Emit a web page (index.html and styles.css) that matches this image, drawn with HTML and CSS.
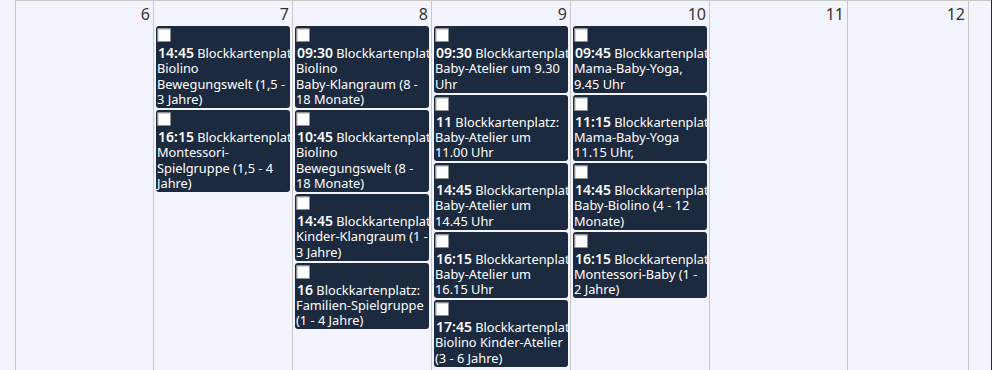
FILE: index.html
```html
<!DOCTYPE html>
<html lang="de">
<head>
<meta charset="utf-8">
<title>Kalender</title>
<link rel="stylesheet" href="styles.css">
</head>
<body>
<div class="page">
  <div class="week">
    <div class="day w138"><div class="num">6</div></div>
    <div class="day w139"><div class="num">7</div>
      <div class="ev"><span class="cb"></span><div class="txt"><div class="l1"><b>14:45</b> Blockkartenplatz:</div>Biolino<br>Bewegungswelt (1,5 -<br>3 Jahre)</div></div>
      <div class="ev"><span class="cb"></span><div class="txt"><div class="l1"><b>16:15</b> Blockkartenplatz:</div>Montessori-<br>Spielgruppe (1,5 - 4<br>Jahre)</div></div>
    </div>
    <div class="day w139"><div class="num">8</div>
      <div class="ev"><span class="cb"></span><div class="txt"><div class="l1"><b>09:30</b> Blockkartenplatz:</div>Biolino<br>Baby-Klangraum (8 -<br>18 Monate)</div></div>
      <div class="ev"><span class="cb"></span><div class="txt"><div class="l1"><b>10:45</b> Blockkartenplatz:</div>Biolino<br>Bewegungswelt (8 -<br>18 Monate)</div></div>
      <div class="ev"><span class="cb"></span><div class="txt"><div class="l1"><b>14:45</b> Blockkartenplatz:</div>Kinder-Klangraum (1 -<br>3 Jahre)</div></div>
      <div class="ev"><span class="cb"></span><div class="txt"><div class="l1"><b>16</b> Blockkartenplatz:</div>Familien-Spielgruppe<br>(1 - 4 Jahre)</div></div>
    </div>
    <div class="day w139"><div class="num">9</div>
      <div class="ev"><span class="cb"></span><div class="txt"><div class="l1"><b>09:30</b> Blockkartenplatz:</div>Baby-Atelier um 9.30<br>Uhr</div></div>
      <div class="ev"><span class="cb"></span><div class="txt"><div class="l1"><b>11</b> Blockkartenplatz:</div>Baby-Atelier um<br>11.00 Uhr</div></div>
      <div class="ev"><span class="cb"></span><div class="txt"><div class="l1"><b>14:45</b> Blockkartenplatz:</div>Baby-Atelier um<br>14.45 Uhr</div></div>
      <div class="ev"><span class="cb"></span><div class="txt"><div class="l1"><b>16:15</b> Blockkartenplatz:</div>Baby-Atelier um<br>16.15 Uhr</div></div>
      <div class="ev"><span class="cb"></span><div class="txt"><div class="l1"><b>17:45</b> Blockkartenplatz:</div>Biolino Kinder-Atelier<br>(3 - 6 Jahre)</div></div>
    </div>
    <div class="day w139"><div class="num">10</div>
      <div class="ev"><span class="cb"></span><div class="txt"><div class="l1"><b>09:45</b> Blockkartenplatz:</div>Mama-Baby-Yoga,<br>9.45 Uhr</div></div>
      <div class="ev"><span class="cb"></span><div class="txt"><div class="l1"><b>11:15</b> Blockkartenplatz:</div>Mama-Baby-Yoga<br>11.15 Uhr,</div></div>
      <div class="ev"><span class="cb"></span><div class="txt"><div class="l1"><b>14:45</b> Blockkartenplatz:</div>Baby-Biolino (4 - 12<br>Monate)</div></div>
      <div class="ev"><span class="cb"></span><div class="txt"><div class="l1"><b>16:15</b> Blockkartenplatz:</div>Montessori-Baby (1 -<br>2 Jahre)</div></div>
    </div>
    <div class="day w138"><div class="num">11</div></div>
    <div class="day w121 last"><div class="num">12</div></div>
  </div>
</div>
</body>
</html>
```

FILE: styles.css
```css
html, body {
  margin: 0;
  padding: 0;
  background: #f3f4fd;
}
.page {
  width: 991px;
  height: 370px;
  border-right: 1px solid #1c2a40;
  overflow: hidden;
  font-family: "Noto Sans", "DejaVu Sans", sans-serif;
}
.week {
  display: flex;
  margin-left: 15px;
  height: 370px;
  border-top: 1px solid #c8c8c8;
}
.day {
  box-sizing: border-box;
  border-left: 1px solid #c8c8c8;
  height: 100%;
}
.day.last { border-right: 1px solid #c8c8c8; }
.w138 { width: 138px; }
.w139 { width: 139px; }
.w121 { width: 122px; }
.num {
  box-sizing: border-box;
  height: 25px;
  padding: 4px 3px 0 0;
  text-align: right;
  font-size: 16px;
  line-height: 18px;
  color: #333333;
}
.ev {
  margin: 0 2px 2px 2px;
  padding: 2px 1px 0 1px;
  background: #1c2a40;
  border-radius: 3px;
  color: #ffffff;
  overflow: hidden;
  width: 132px;
}
.cb {
  display: block;
  box-sizing: border-box;
  width: 14px;
  height: 14px;
  background: #ffffff;
  border: 1px solid #8f8f8f;
  border-radius: 1px;
  box-shadow: inset 1px 1px 1px #d0d0d0;
  margin-bottom: 2px;
}
.txt {
  font-size: 12.8px;
  line-height: 15.5px;
  white-space: nowrap;
  padding-bottom: 0.5px;
}
.l1 {
  height: 17px;
  line-height: 17px;
  padding-left: 1px;
}
.l1 b {
  font-size: 14px;
  font-weight: 600;
}
```
